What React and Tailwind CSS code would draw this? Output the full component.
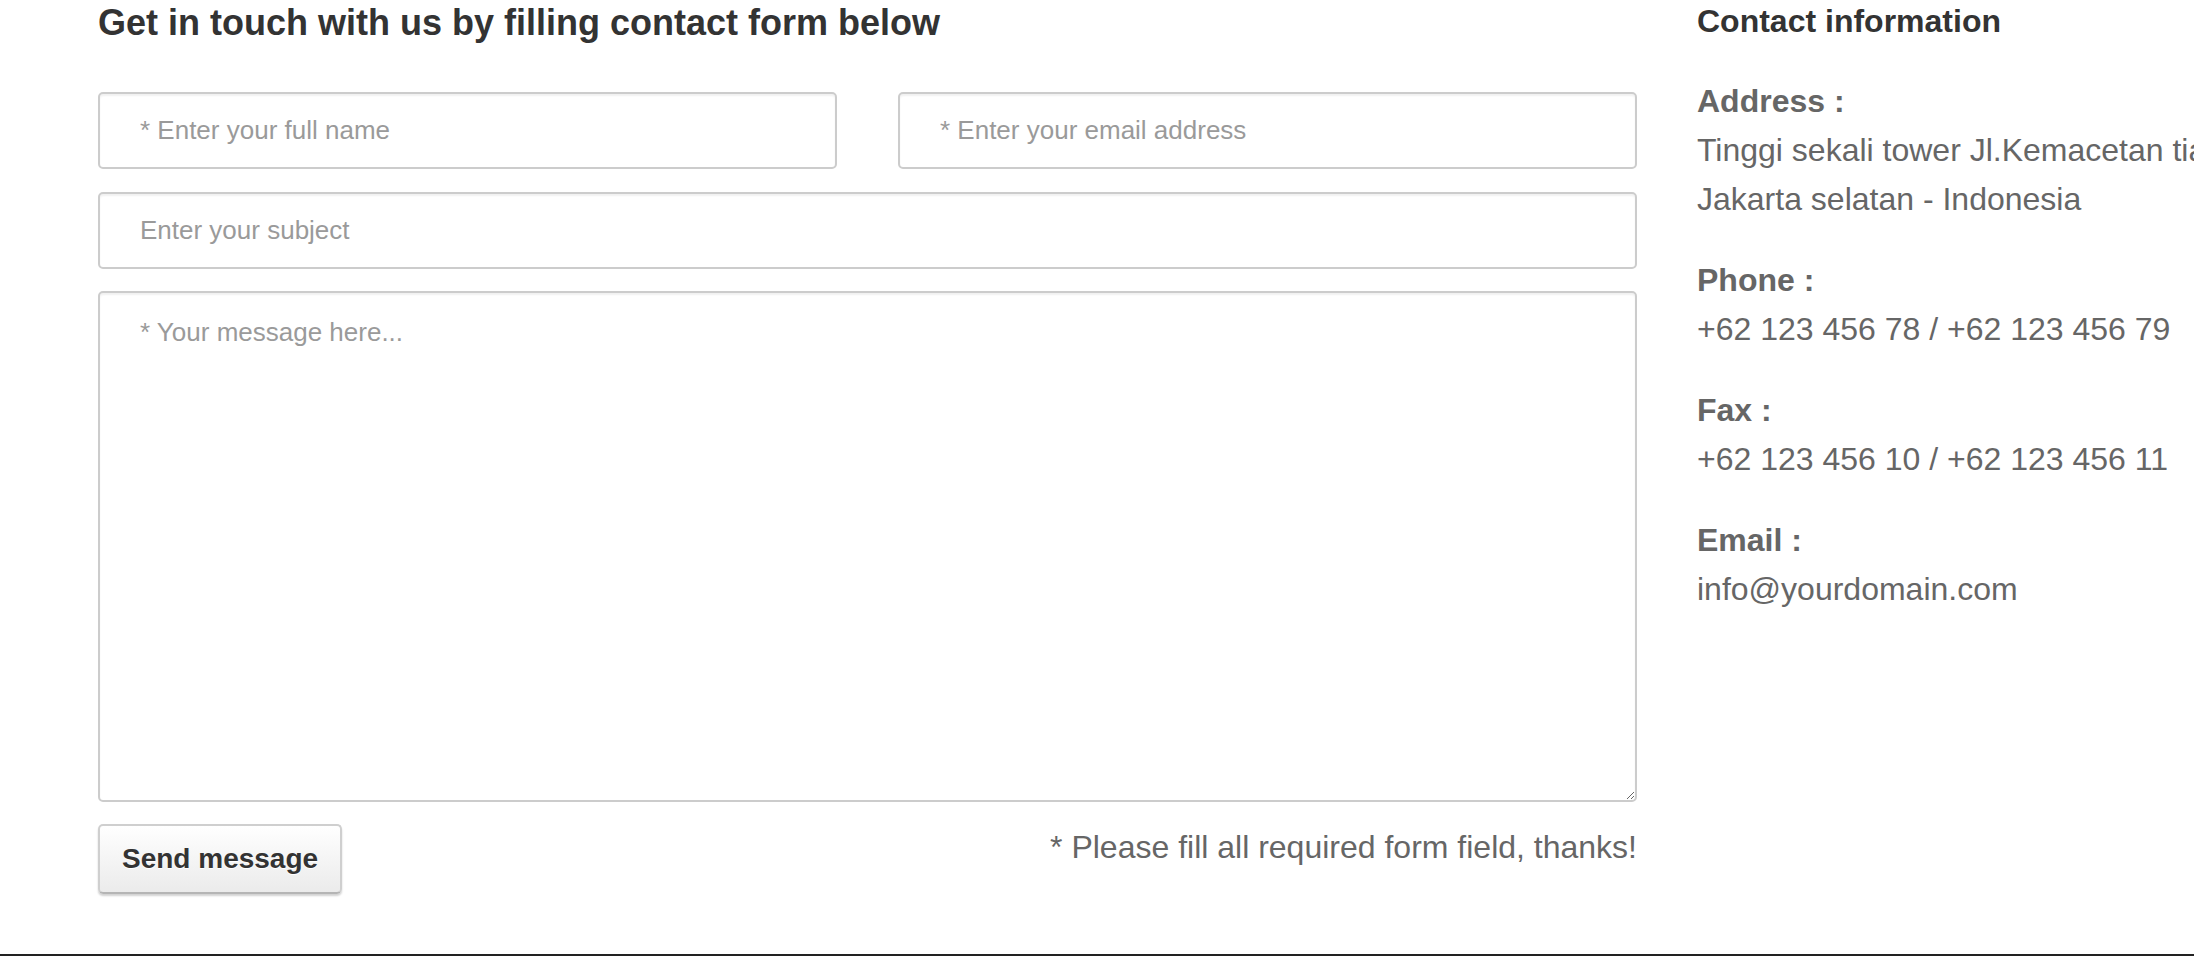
import { useState } from "react";

const font = { fontFamily: '"Liberation Sans", Arial, Helvetica, sans-serif' };

const fieldClass =
  "w-full border-2 border-[#cccccc] rounded-[5px] bg-white text-[26px] text-[#555] px-[40px] outline-none shadow-[inset_0_2px_2px_rgba(0,0,0,0.06)] placeholder:text-[#9a9a9a]";

const contactItems = [
  { label: "Address :", lines: ["Tinggi sekali tower Jl.Kemacetan tiada henti", "Jakarta selatan - Indonesia"] },
  { label: "Phone :", lines: ["+62 123 456 78 / +62 123 456 79"] },
  { label: "Fax :", lines: ["+62 123 456 10 / +62 123 456 11"] },
  { label: "Email :", lines: ["info@yourdomain.com"] },
];

const App = () => {
  const [form, setForm] = useState({ name: "", email: "", subject: "", message: "" });

  const handleSubmit = (e) => {
    e.preventDefault();
  };

  return (
    <div
      className="h-[956px] overflow-hidden bg-white border-b-2 border-[#222] text-[#666]"
      style={font}
    >
      <div className="flex pl-[98px] gap-[60px]">
        {/* Contact form */}
        <div className="w-[1539px] shrink-0">
          <h3 className="text-[36px] leading-[42px] font-bold text-[#333] mt-[2px]">
            Get in touch with us by filling contact form below
          </h3>

          <form onSubmit={handleSubmit} className="mt-[48px] flex flex-col gap-[23px]">
            <div className="grid grid-cols-2 gap-[61px]">
              <input
                type="text"
                placeholder="* Enter your full name"
                className={`${fieldClass} h-[77px]`}
                value={form.name}
                onChange={(e) => setForm({ ...form, name: e.target.value })}
              />
              <input
                type="email"
                placeholder="* Enter your email address"
                className={`${fieldClass} h-[77px]`}
                value={form.email}
                onChange={(e) => setForm({ ...form, email: e.target.value })}
              />
            </div>
            <input
              type="text"
              placeholder="Enter your subject"
              className={`${fieldClass} h-[77px]`}
              value={form.subject}
              onChange={(e) => setForm({ ...form, subject: e.target.value })}
            />
            <textarea
              placeholder="* Your message here..."
              className={`${fieldClass} h-[511px] pt-[24px] leading-[30px] -mt-[1px]`}
              value={form.message}
              onChange={(e) => setForm({ ...form, message: e.target.value })}
            />

            <div className="flex justify-between items-start -mt-[1px]">
              <button
                type="submit"
                className="h-[70px] px-[22px] border-2 border-[#cfcfcf] border-b-[#b5b5b5] rounded-[5px] bg-linear-to-b from-white to-[#ebebeb] text-[28px] font-bold text-[#333] shadow-[0_2px_2px_rgba(0,0,0,0.18)] [text-shadow:0_1px_0_#fff]"
              >
                Send message
              </button>
              <p className="text-[32px] leading-[48px] text-[#666] -mt-[1px]">
                * Please fill all required form field, thanks!
              </p>
            </div>
          </form>
        </div>

        {/* Contact information */}
        <div className="shrink-0 whitespace-nowrap">
          <h4 className="text-[32px] leading-[42px] font-bold text-[#333]">Contact information</h4>
          <div className="mt-[35px]">
            {contactItems.map((item) => (
              <div key={item.label} className="mb-[32px] text-[32px] leading-[49px]">
                <div className="font-bold text-[#666]">{item.label}</div>
                {item.lines.map((line) => (
                  <div key={line}>{line}</div>
                ))}
              </div>
            ))}
          </div>
        </div>
      </div>
    </div>
  );
};

export default App;
